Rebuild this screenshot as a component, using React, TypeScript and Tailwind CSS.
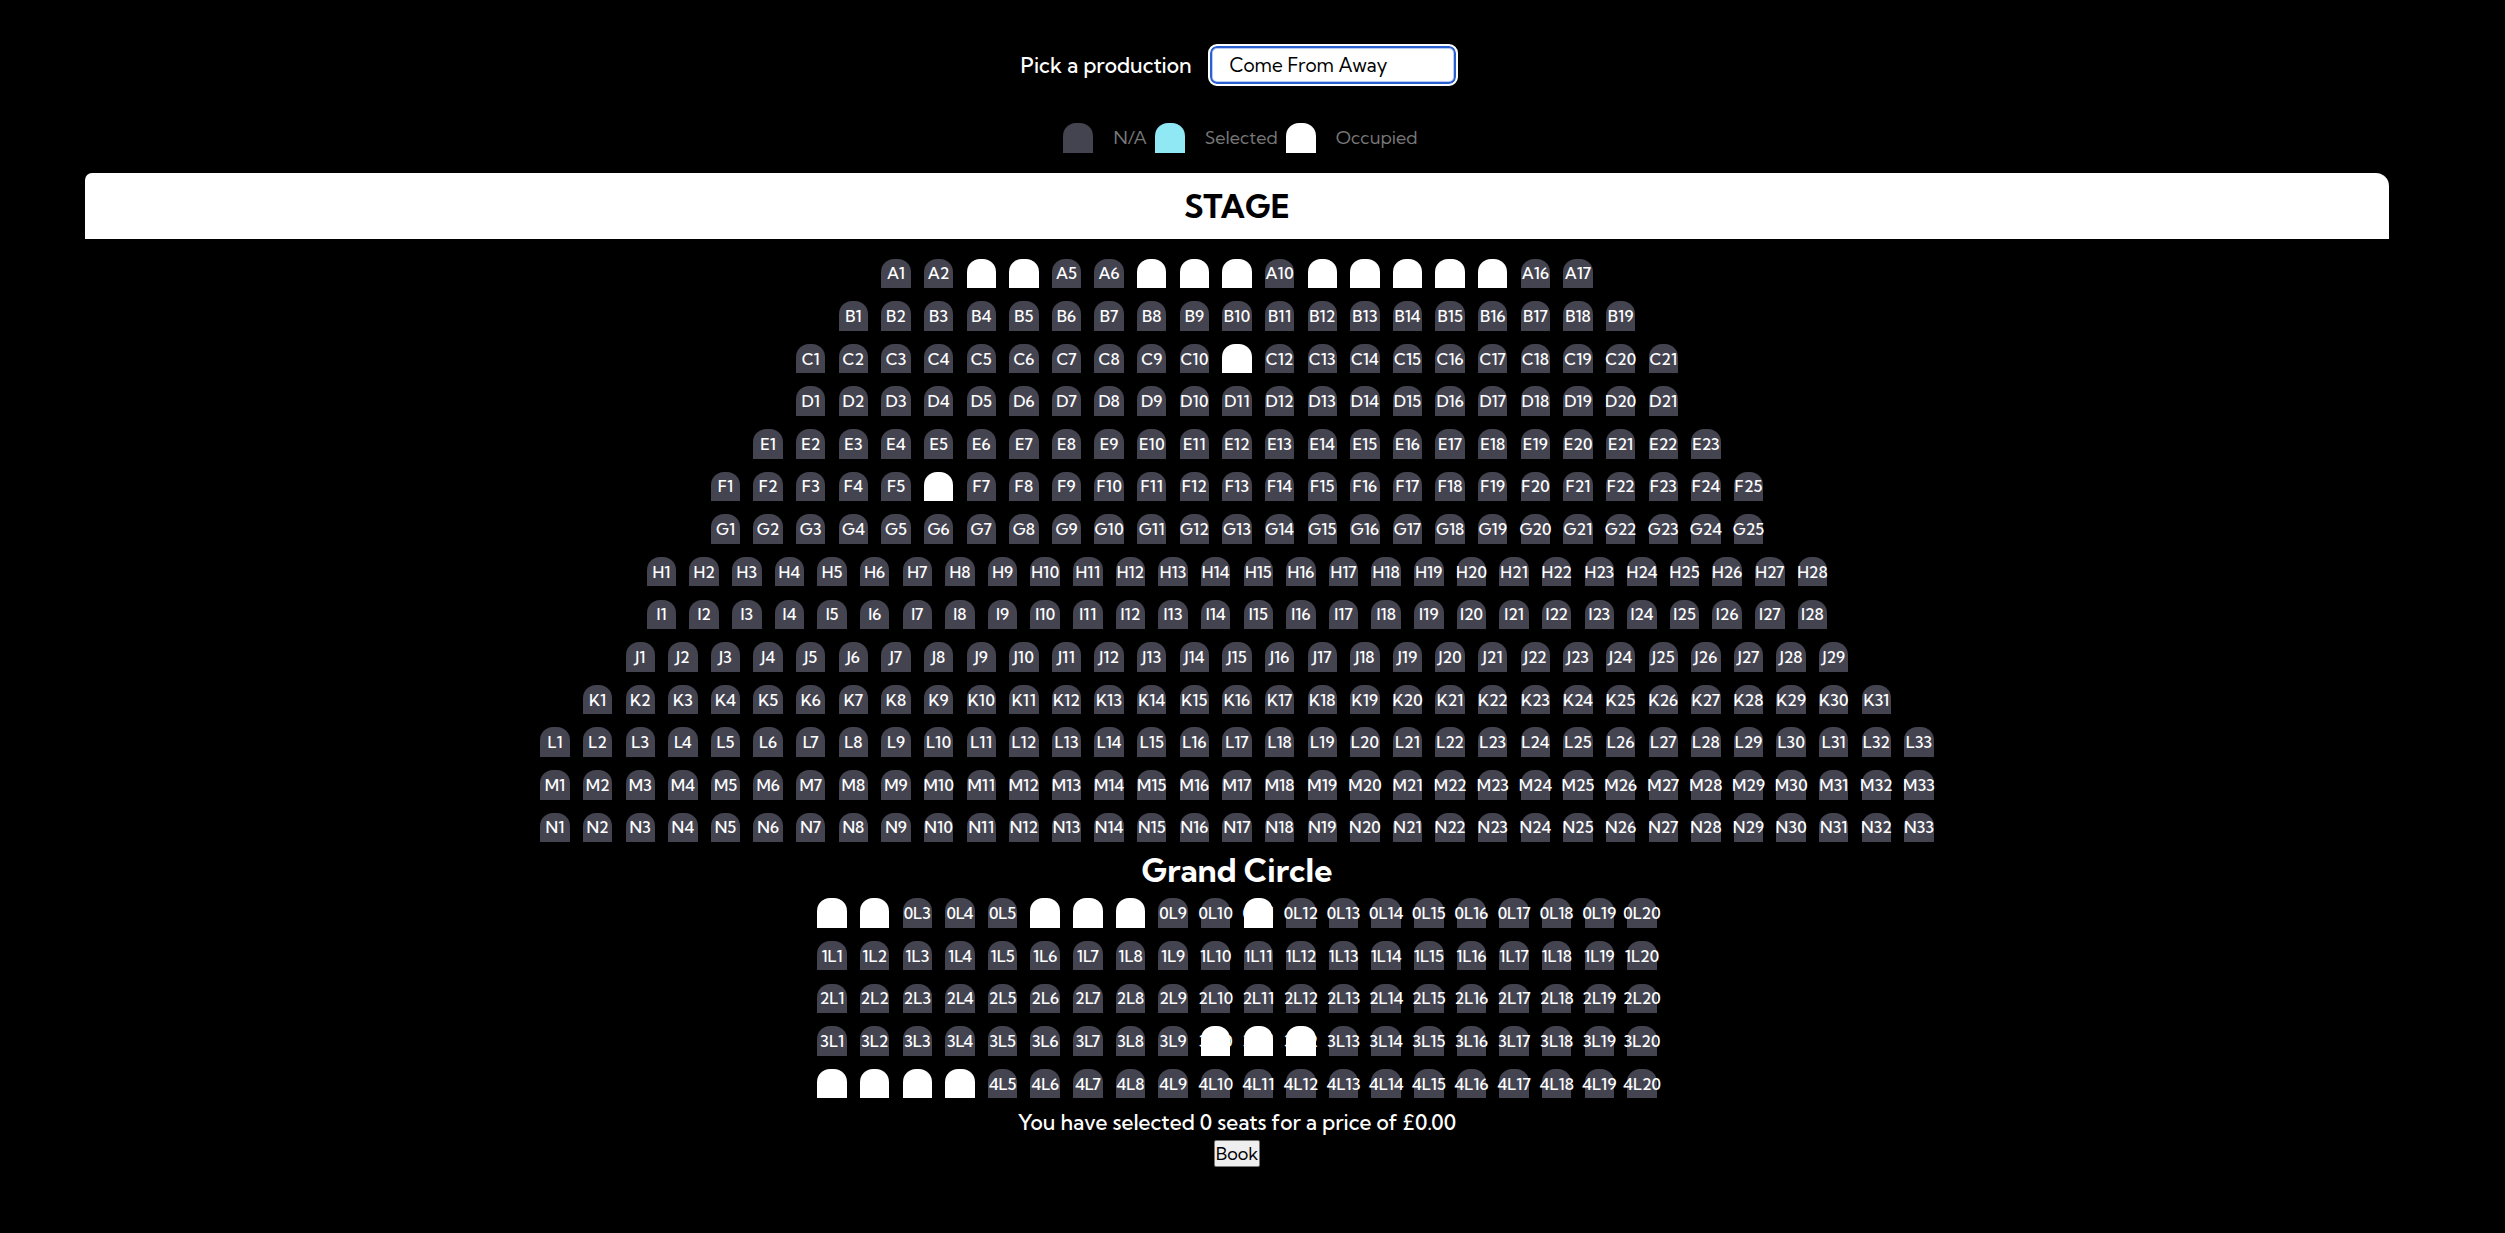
import { useState } from 'react';

const stalls: [string, number][] = [
  ['A', 17], ['B', 19], ['C', 21], ['D', 21], ['E', 23], ['F', 25], ['G', 25],
  ['H', 28], ['I', 28], ['J', 29], ['K', 31], ['L', 33], ['M', 33], ['N', 33],
];
const circle: [string, number][] = [['0L', 20], ['1L', 20], ['2L', 20], ['3L', 20], ['4L', 20]];

const occupied = new Set([
  'A3', 'A4', 'A7', 'A8', 'A9', 'A11', 'A12', 'A13', 'A14', 'A15', 'C11', 'F6',
  '0L1', '0L2', '0L6', '0L7', '0L8', '0L11', '3L10', '3L11', '3L12', '4L1', '4L2', '4L3', '4L4',
]);

const PRICE = 25;

type RowProps = { name: string; count: number; selected: string[]; onToggle: (id: string) => void };

function SeatRow({ name, count, selected, onToggle }: RowProps) {
  return (
    <div className="flex justify-center">
      {Array.from({ length: count }, (_, i) => {
        const id = `${name}${i + 1}`;
        const taken = occupied.has(id);
        const color = taken ? 'bg-white' : selected.includes(id) ? 'bg-[#8fe8f4]' : 'bg-[#444451]';
        return (
          <div key={id} className="flex aspect-square w-[calc(100%/33)] shrink-0 items-center justify-center">
            <button
              type="button"
              disabled={taken}
              onClick={() => onToggle(id)}
              className={`flex h-[69%] w-[69%] items-center justify-center rounded-t-[13px] text-[16px] leading-none font-medium whitespace-nowrap text-white ${color}`}
            >
              {id}
            </button>
          </div>
        );
      })}
    </div>
  );
}

function LegendItem({ color, label }: { color: string; label: string }) {
  return (
    <li className="flex items-center gap-5">
      <span className={`size-[30px] rounded-t-[13px] ${color}`} />
      <span>{label}</span>
    </li>
  );
}

export default function App() {
  const [selected, setSelected] = useState<string[]>([]);
  const toggle = (id: string) =>
    setSelected((s) => (s.includes(id) ? s.filter((x) => x !== id) : [...s, id]));

  return (
    <main className="flex min-h-screen flex-col items-center bg-black pt-[44px] pr-[116px] pb-16 pl-[85px] font-['Kumbh_Sans','Lato',sans-serif] text-white">
      <div className="flex items-center gap-4 pl-1">
        <label htmlFor="production" className="text-[21px] leading-7 font-medium">Pick a production</label>
        <select
          id="production"
          defaultValue="Come From Away"
          className="h-[42px] w-[250px] appearance-none rounded-[9px] border-2 border-white bg-white px-5 text-[19px] text-black shadow-[inset_0_0_0_2px_#2a5fcf,inset_0_0_0_3px_#b9cdf2] outline-none"
        >
          <option>Come From Away</option>
        </select>
      </div>

      <ul className="mt-[37px] flex gap-2 pl-[7px] text-[18px] leading-[30px] text-[#777777]">
        <LegendItem color="bg-[#444451]" label="N/A" />
        <LegendItem color="bg-[#8fe8f4]" label="Selected" />
        <LegendItem color="bg-white" label="Occupied" />
      </ul>

      <h1 className="mt-5 w-full rounded-tl-[7px] rounded-tr-[13px] bg-white text-center text-[32px] leading-[66px] font-bold text-black">
        STAGE
      </h1>

      <div className="mt-[13px] w-full max-w-[1407px]">
        {stalls.map(([name, count]) => (
          <SeatRow key={name} name={name} count={count} selected={selected} onToggle={toggle} />
        ))}
        <h2 className="text-center text-[32px] leading-[43px] font-bold">Grand Circle</h2>
        {circle.map(([name, count]) => (
          <SeatRow key={name} name={name} count={count} selected={selected} onToggle={toggle} />
        ))}
      </div>

      <p className="mt-[3px] text-[21px] leading-7 font-medium">
        You have selected {selected.length} seats for a price of £{(selected.length * PRICE).toFixed(2)}
      </p>
      <button type="button" className="mt-1 rounded-xs border border-[#767676] bg-[#efefef] px-px text-[18px] leading-[25px] text-black">
        Book
      </button>
    </main>
  );
}
